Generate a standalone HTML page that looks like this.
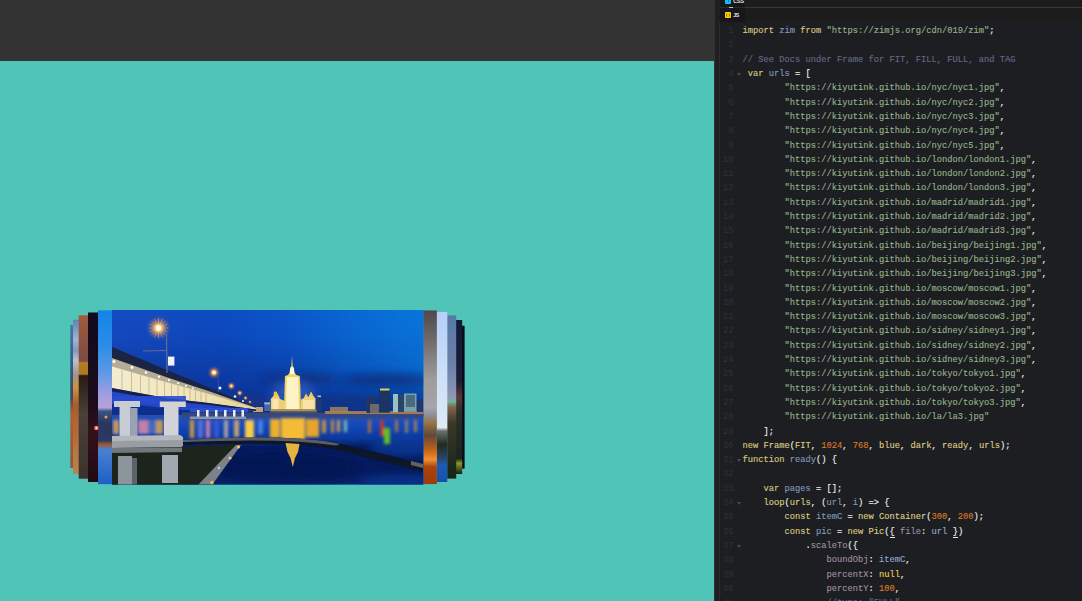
<!DOCTYPE html>
<html lang="en">
<head>
<meta charset="utf-8">
<title>ZIM Carousel - CodePen</title>
<style>
html,body{margin:0;padding:0;}
body{width:1082px;height:601px;overflow:hidden;position:relative;background:#1d1e22;font-family:"Liberation Mono",monospace;}
#preview{position:absolute;left:0;top:0;width:715px;height:601px;background:#333333;overflow:hidden;}
#stage{position:absolute;left:0;top:60.5px;width:714.4px;height:560px;background:#50c4b7;}
#gutterbar{position:absolute;left:715px;top:0;width:4.8px;height:601px;background:#1f1f22;}
#edge{position:absolute;left:719.2px;top:21.5px;width:0.9px;height:580px;background:#2b2c31;}
#csshead{position:absolute;left:720px;top:0;width:362px;height:7.4px;background:linear-gradient(90deg,#17171a 0,#17171a 25px,#1c1c1c 25px);}
#divider{position:absolute;left:720px;top:7.1px;width:362px;height:0.9px;background:linear-gradient(90deg,#2a2a2e 0,#2a2a2e 25px,#373739 25px);}
#handle{position:absolute;left:728.7px;top:7.1px;width:4.3px;height:0.9px;background:#c2c3cb;}
#jshead{position:absolute;left:720px;top:8px;width:362px;height:13.5px;background:#1c1c1c;}
#jstab{position:absolute;left:720px;top:8px;width:25px;height:13.5px;background:#17171b;}
.ico{position:absolute;left:725px;width:6.2px;height:6.2px;border-radius:1px;}
.tabt{position:absolute;left:733.2px;font-family:"Liberation Sans",sans-serif;font-weight:bold;font-size:5.3px;line-height:6px;color:#e8e9ee;letter-spacing:0;white-space:pre;}
#code{position:absolute;left:0;top:0;width:1082px;height:601px;overflow:hidden;}
.cl,.ln{position:absolute;height:14.3px;line-height:14.3px;font-size:8.75px;white-space:pre;}
.cl{left:742.4px;color:#f2f2f2;-webkit-text-stroke:0.12px currentColor;}
.ln{left:720px;width:13.5px;text-align:right;color:#2f3138;}
.fold{position:absolute;left:736.6px;width:0;height:0;border-left:2.1px solid transparent;border-right:2.1px solid transparent;border-top:3.1px solid #494b55;}
.k{color:#ddca7e;}
.v{color:#dfce86;}
.d{color:#809bbd;}
.s{color:#96b38a;}
.n{color:#d97a28;}
.p{color:#a08ea2;}
.a{color:#e8d24e;}
.w{color:#8fa9cf;}
.m{border-bottom:0.7px solid #e8e8e8;}
.c{color:#5f6b8c;}
</style>
</head>
<body>
<div id="preview"><div id="stage"></div>
<svg id="pic" width="715" height="601" viewBox="0 0 715 601" style="position:absolute;left:0;top:0">
<defs>
<clipPath id="cm"><rect x="112" y="310" width="311.3" height="174.4"/></clipPath>
<linearGradient id="sky" x1="0" y1="0" x2="1" y2="0"><stop offset="0" stop-color="#164cc2"/><stop offset="0.35" stop-color="#0d4cc2"/><stop offset="0.7" stop-color="#0a5ed0"/><stop offset="1" stop-color="#0876de"/></linearGradient>
<linearGradient id="skyv" x1="0" y1="0" x2="0" y2="1"><stop offset="0" stop-color="#062288" stop-opacity="0"/><stop offset="0.25" stop-color="#08268a" stop-opacity="0.12"/><stop offset="0.5" stop-color="#0a2884" stop-opacity="0.36"/><stop offset="0.75" stop-color="#0a2884" stop-opacity="0.62"/><stop offset="1" stop-color="#0c267a" stop-opacity="0.82"/></linearGradient>
<linearGradient id="az" x1="0" y1="0" x2="1" y2="0"><stop offset="0.55" stop-color="#0a70d4" stop-opacity="0"/><stop offset="1" stop-color="#0a74d8" stop-opacity="0.6"/></linearGradient>
<linearGradient id="azm" x1="0" y1="0" x2="0" y2="1"><stop offset="0" stop-color="#fff"/><stop offset="0.55" stop-color="#fff"/><stop offset="0.85" stop-color="#000"/></linearGradient>
<mask id="mz"><rect x="112" y="310" width="312" height="106" fill="url(#azm)"/></mask>
<linearGradient id="water" x1="0" y1="0" x2="0" y2="1"><stop offset="0" stop-color="#2850b0"/><stop offset="0.15" stop-color="#1448b8"/><stop offset="0.34" stop-color="#0b389c"/><stop offset="0.45" stop-color="#051c62"/><stop offset="0.8" stop-color="#051a5c"/><stop offset="1" stop-color="#08246e"/></linearGradient>
<radialGradient id="lamp"><stop offset="0" stop-color="#fff8e0"/><stop offset="0.25" stop-color="#ffc060"/><stop offset="0.6" stop-color="#c07850" stop-opacity="0.45"/><stop offset="1" stop-color="#6050a0" stop-opacity="0"/></radialGradient>
<linearGradient id="gA" x1="0" y1="0" x2="0" y2="1"><stop offset="0" stop-color="#1484e8"/><stop offset="0.2" stop-color="#2c8ce8"/><stop offset="0.35" stop-color="#5c98e4"/><stop offset="0.5" stop-color="#a69ee0"/><stop offset="0.56" stop-color="#b8a2d8"/><stop offset="0.58" stop-color="#3a5488"/><stop offset="0.65" stop-color="#283660"/><stop offset="0.75" stop-color="#2c3a62"/><stop offset="0.77" stop-color="#a05828"/><stop offset="0.8" stop-color="#4a80d0"/><stop offset="1" stop-color="#1c60c8"/></linearGradient>
<linearGradient id="gB" x1="0" y1="0" x2="0" y2="1"><stop offset="0" stop-color="#120a1e"/><stop offset="0.55" stop-color="#1c0c1c"/><stop offset="0.7" stop-color="#34101c"/><stop offset="1" stop-color="#200a14"/></linearGradient>
<linearGradient id="gC" x1="0" y1="0" x2="0" y2="1"><stop offset="0" stop-color="#a25a3a"/><stop offset="0.28" stop-color="#7a4c44"/><stop offset="0.29" stop-color="#b27a22"/><stop offset="0.36" stop-color="#b07820"/><stop offset="0.37" stop-color="#2a1a14"/><stop offset="0.6" stop-color="#4a4038"/><stop offset="1" stop-color="#3a322c"/></linearGradient>
<linearGradient id="gD" x1="0" y1="0" x2="0" y2="1"><stop offset="0" stop-color="#5c84b8"/><stop offset="0.13" stop-color="#a4b4cc"/><stop offset="0.2" stop-color="#8098b8"/><stop offset="0.26" stop-color="#c0c0c8"/><stop offset="0.36" stop-color="#a09488"/><stop offset="0.44" stop-color="#d09040"/><stop offset="0.55" stop-color="#a85c30"/><stop offset="0.8" stop-color="#b87040"/><stop offset="1" stop-color="#b88450"/></linearGradient>
<linearGradient id="gE" x1="0" y1="0" x2="0" y2="1"><stop offset="0" stop-color="#4878a8"/><stop offset="0.3" stop-color="#2c5a88"/><stop offset="0.5" stop-color="#3a4a60"/><stop offset="0.62" stop-color="#b06030"/><stop offset="1" stop-color="#8a5a40"/></linearGradient>
<linearGradient id="gR1" x1="0" y1="0" x2="0" y2="1"><stop offset="0" stop-color="#50484c"/><stop offset="0.2" stop-color="#767072"/><stop offset="0.4" stop-color="#a09c9c"/><stop offset="0.56" stop-color="#a6a4ac"/><stop offset="0.61" stop-color="#8c8894"/><stop offset="0.64" stop-color="#9a7a48"/><stop offset="0.72" stop-color="#60483a"/><stop offset="0.8" stop-color="#c06018"/><stop offset="0.86" stop-color="#f09030"/><stop offset="0.9" stop-color="#a84410"/><stop offset="1" stop-color="#a03a0a"/></linearGradient>
<linearGradient id="gR2" x1="0" y1="0" x2="0" y2="1"><stop offset="0" stop-color="#b6cef8"/><stop offset="0.4" stop-color="#d0e0f8"/><stop offset="0.68" stop-color="#e0e8f4"/><stop offset="0.7" stop-color="#6a7068"/><stop offset="0.78" stop-color="#202c20"/><stop offset="0.86" stop-color="#2a4468"/><stop offset="0.9" stop-color="#1c5cb4"/><stop offset="1" stop-color="#1850a8"/></linearGradient>
<linearGradient id="gR3" x1="0" y1="0" x2="0" y2="1"><stop offset="0" stop-color="#5878a8"/><stop offset="0.3" stop-color="#6a80a8"/><stop offset="0.5" stop-color="#8c98b4"/><stop offset="0.53" stop-color="#70b0a0"/><stop offset="0.56" stop-color="#806850"/><stop offset="0.66" stop-color="#3a3828"/><stop offset="1" stop-color="#16241a"/></linearGradient>
<linearGradient id="gR4" x1="0" y1="0" x2="0" y2="1"><stop offset="0" stop-color="#111a3a"/><stop offset="0.4" stop-color="#1a1e34"/><stop offset="0.5" stop-color="#5a3838"/><stop offset="0.6" stop-color="#2a3028"/><stop offset="0.9" stop-color="#1a2420"/><stop offset="0.93" stop-color="#8a9a20"/><stop offset="1" stop-color="#141c20"/></linearGradient>
<linearGradient id="band" x1="0" y1="0" x2="1" y2="0"><stop offset="0" stop-color="#f4ecd0"/><stop offset="0.6" stop-color="#f0e4b8"/><stop offset="1" stop-color="#e8d090"/></linearGradient>
<filter id="b1" x="-20%" y="-20%" width="140%" height="140%"><feGaussianBlur stdDeviation="0.7"/></filter>
<filter id="b2" x="-20%" y="-20%" width="140%" height="140%"><feGaussianBlur stdDeviation="1.6"/></filter>
<filter id="b4" x="-30%" y="-30%" width="160%" height="160%"><feGaussianBlur stdDeviation="4"/></filter>
</defs>
<!-- stacked slices left -->
<rect x="70.3" y="325" width="3" height="143" fill="url(#gE)"/>
<rect x="73" y="319.7" width="6" height="154.3" fill="url(#gD)"/>
<rect x="78.7" y="315.3" width="9.6" height="163.4" fill="url(#gC)"/>
<rect x="88" y="312.5" width="10.2" height="169.5" fill="url(#gB)"/>
<rect x="98" y="310.3" width="14.2" height="173.9" fill="url(#gA)"/>
<circle cx="96.3" cy="428" r="2.2" fill="#ff6a58" filter="url(#b1)"/><circle cx="96.5" cy="428" r="0.9" fill="#fff0e8"/>
<circle cx="106" cy="417" r="1.5" fill="#f0a040" filter="url(#b1)"/>
<!-- stacked slices right -->
<rect x="462" y="325.8" width="2.6" height="142.8" fill="#090a1a"/>
<rect x="456" y="320" width="6.2" height="154" fill="url(#gR4)"/>
<rect x="447.2" y="315.4" width="9" height="163.2" fill="url(#gR3)"/>
<rect x="436.7" y="312" width="10.6" height="170" fill="url(#gR2)"/>
<rect x="423.2" y="310.4" width="13.6" height="173.7" fill="url(#gR1)"/>
<!-- main photo -->
<g clip-path="url(#cm)">
<rect x="112" y="310" width="312" height="175" fill="url(#sky)"/>
<rect x="112" y="310" width="312" height="106" fill="url(#skyv)"/>
<rect x="112" y="310" width="312" height="106" fill="url(#az)" mask="url(#mz)"/>
<!-- clouds -->
<g filter="url(#b4)" opacity="0.8">
<ellipse cx="300" cy="379" rx="40" ry="4" fill="#15286c"/>
<ellipse cx="385" cy="380" rx="45" ry="6" fill="#0f2c7c"/>
<ellipse cx="230" cy="402" rx="40" ry="6" fill="#26367c"/>
<ellipse cx="350" cy="402" rx="40" ry="5" fill="#163080"/>
<ellipse cx="293" cy="395" rx="22" ry="14" fill="#3a66cc" opacity="0.7"/>
</g>
<!-- water -->
<rect x="112" y="415" width="312" height="70" fill="url(#water)"/>
<ellipse cx="285" cy="468" rx="70" ry="16" fill="#041450" opacity="0.7" filter="url(#b4)"/>
<ellipse cx="405" cy="447" rx="36" ry="9" fill="#0e40a4" opacity="0.7" filter="url(#b4)"/>
<ellipse cx="400" cy="482" rx="40" ry="8" fill="#0c389c" opacity="0.6" filter="url(#b4)"/>
<!-- shoreline -->
<rect x="182" y="412.5" width="242" height="5" fill="#34467c" filter="url(#b1)"/>
<rect x="325" y="411" width="99" height="3" fill="#b88450" filter="url(#b1)" opacity="0.85"/>
<!-- reflections -->
<g filter="url(#b2)">
<rect x="270" y="419" width="10" height="19" fill="#eeb02c"/>
<rect x="281" y="418" width="24" height="22" fill="#f4bc34"/>
<rect x="306" y="419" width="13" height="18" fill="#e8a42c"/>
<rect x="245" y="420" width="9" height="19" fill="#f8cc48"/>
<rect x="258" y="420" width="5" height="14" fill="#4a80e0"/>
<rect x="322" y="420" width="4" height="13" fill="#c89040"/>
<rect x="331" y="420" width="3" height="13" fill="#c8903c"/>
<rect x="337" y="420" width="3" height="12" fill="#d0a050"/>
<rect x="344" y="420" width="3" height="12" fill="#80c0b0"/>
<rect x="368" y="420" width="3" height="13" fill="#b07040"/>
<rect x="380" y="420" width="4" height="16" fill="#c03838"/>
<rect x="384" y="428" width="6" height="16" fill="#62c020"/>
<rect x="395" y="420" width="3" height="12" fill="#a07850"/>
<rect x="405" y="420" width="3" height="13" fill="#90806c"/>
<rect x="414" y="420" width="3" height="12" fill="#a08060"/>
<rect x="190" y="420" width="4" height="18" fill="#d89838"/>
<rect x="198" y="420" width="5" height="18" fill="#5a70d0"/>
<rect x="206" y="420" width="4" height="18" fill="#c880b0"/>
<rect x="214" y="420" width="5" height="18" fill="#3458d0"/>
<rect x="224" y="420" width="4" height="18" fill="#b0a0a8"/>
<rect x="234" y="420" width="5" height="17" fill="#c8a070"/>
</g>
<!-- building main -->
<g filter="url(#b1)">
<path d="M292 355.500 L292.700 366 L294 368 L294.500 372.500 L296.300 375 L299.800 376 L300.400 388 L301 411 L284 411 L284.600 388 L285 376 L288 375 L289.600 372.500 L290.200 368 L291.400 366 Z" fill="#f2d468"/>
<path d="M286.800 377 L298.200 377 L299 410 L286 410 Z" fill="#fdf3c4"/>
<path d="M290.600 367.500 L293.600 367.500 L294.400 374 L289.800 374 Z" fill="#fffbe6"/>
<path d="M270.700 411 L270.700 399 L273 396.500 L276.200 391.500 L279 396.500 L280 399 L285 401 L285 411 Z" fill="#ecd07a"/>
<path d="M274 391.800 L276.200 391.500 L278.600 396 L273.600 396.500 Z" fill="#f2c832"/>
<path d="M301 411 L301 399.500 L303.800 398 L306 393.800 L308.200 397 L309 396 L311 391.800 L313.400 396 L315.500 398.500 L315.500 411 Z" fill="#ecd07a"/>
<path d="M309.400 395.500 L311 391.800 L313 395.500 Z M304.600 397 L306 393.800 L307.600 397 Z" fill="#f2c832"/>
<rect x="272.500" y="399" width="6" height="11" fill="#f8e8b0"/>
<rect x="303" y="400" width="11" height="10" fill="#f6e4a8"/>
<rect x="264.300" y="402.400" width="5.700" height="8.600" fill="#4a68a8"/>
<rect x="264.300" y="402.400" width="5.700" height="2" fill="#88b8e8"/>
<rect x="317" y="395.500" width="4.500" height="15.500" fill="#22386e"/>
<rect x="317.500" y="395.500" width="3.500" height="1.600" fill="#a8c0e0"/>
<rect x="253" y="407" width="10" height="5" fill="#c0a078"/>
<rect x="270" y="409" width="47" height="3.500" fill="#8a7448" opacity="0.700"/>
</g>
<!-- right city -->
<g filter="url(#b1)">
<rect x="366.500" y="397" width="8" height="16" fill="#26365c"/>
<rect x="370" y="404" width="20" height="9" fill="#6a6a70"/>
<rect x="379" y="388.500" width="11" height="24" fill="#1e3460"/>
<rect x="380" y="388.500" width="9.500" height="2" fill="#d8d060"/>
<rect x="393" y="394" width="5" height="18" fill="#9cc0c0"/>
<rect x="398" y="395" width="6" height="17" fill="#2c4468"/>
<rect x="404" y="393.500" width="12.500" height="18" fill="#7aa0a8"/>
<rect x="406" y="395" width="9" height="12" fill="#4a6c84"/>
<rect x="417" y="400" width="6" height="12" fill="#20386c"/>
<rect x="330" y="407" width="18" height="5" fill="#a8885c" opacity="0.8"/>
</g>
<!-- bridge -->
<path d="M112 386 L112 402 L182 410 L256 411 L256 408 Z" fill="#2446c4"/>
<path d="M112 347 L256 407.300 L256 409 L112 360 Z" fill="#1c2444"/>
<path d="M112 358 L167.500 377.400 L209 391.300 L256 407.800 L256 409.600 L209 403 L167.500 398.200 L112 388 Z" fill="#b4ac94"/>
<path d="M112 366.500 L167.500 382.500 L209 394 L256 408.200 L256 409.600 L209 403 L167.500 398.200 L112 388 Z" fill="url(#band)"/>
<path d="M112 388 L167.500 398.200 L209 403 L256 409.600 L256 411 L209 405 L167.500 401 L112 391.500 Z" fill="#16204a"/>
<g stroke="#c0b088" stroke-width="0.900" opacity="0.850">
<path d="M122 369.500 L122 389.500 M131.500 372.200 L131.500 391.300 M140.500 374.800 L140.500 393 M149 377.200 L149 394.600 M157 379.500 L157 396 M164.500 381.700 L164.500 397.400 M171.500 383.600 L171.500 398.600 M178 385.400 L178 399.400 M184 387 L184 400.100 M190 388.700 L190 400.800 M195.500 390.300 L195.500 401.400 M201 391.800 L201 402 M206 393.200 L206 402.600"/>
</g>
<g fill="#fffef0" filter="url(#b1)"><circle cx="114" cy="361.500" r="1.500"/><circle cx="132" cy="367.500" r="1.400"/><circle cx="146" cy="372.500" r="1.300"/><circle cx="159" cy="376.800" r="1.200"/><circle cx="169" cy="380.200" r="1.100"/><circle cx="178" cy="383.200" r="1"/><circle cx="186" cy="385.800" r="1"/><circle cx="193" cy="388.200" r="0.900"/></g>
<!-- under bridge small pillars -->
<rect x="112" y="396" width="74" height="8" fill="#2a4cd0" opacity="0.9" filter="url(#b1)"/>
<rect x="190" y="408" width="58" height="4" fill="#2c50d0" filter="url(#b1)"/>
<g fill="#e8ecf4" filter="url(#b1)"><rect x="197" y="410" width="2.500" height="7.500"/><rect x="206" y="410" width="2.500" height="7.500"/><rect x="215" y="410" width="2.500" height="7.500"/><rect x="224" y="410" width="2.500" height="7.500"/><rect x="233" y="410" width="2.500" height="7.500"/><rect x="241.500" y="410" width="2.500" height="7.500"/></g>
<rect x="190" y="416.500" width="56" height="2.500" fill="#8c94a8" filter="url(#b1)"/>
<!-- behind pillars water colours -->
<g filter="url(#b2)">
<rect x="138" y="420" width="10" height="14" fill="#c080a8"/>
<rect x="148" y="420" width="8" height="14" fill="#4868c0"/>
<rect x="156" y="420" width="7" height="14" fill="#c09858"/>
<rect x="113" y="420" width="6" height="14" fill="#c89860"/>
</g>
<!-- big pillars -->
<g filter="url(#b1)">
<rect x="130.500" y="408" width="7" height="28" fill="#9aa2b2"/>
<rect x="114" y="401" width="26" height="6" fill="#c8ccd4"/>
<rect x="159.800" y="401.500" width="26" height="5.500" fill="#d4d4cc"/>
<rect x="119.500" y="406" width="11" height="31" fill="#c8ccd4"/>
<rect x="164" y="406" width="14.500" height="31" fill="#d0d4d8"/>
<path d="M112 436 L180 435 L183 437 L183 446 L178 447.500 L112 448 Z" fill="#b4b8bc"/>
<path d="M112 441 L183 440 L183 446 L178 447.500 L112 448 Z" fill="#9a9ea4"/>
</g>
<!-- reflection bottom-left -->
<path d="M112 448 L182 447 L238 444 L210 485 L112 485 Z" fill="#1c241c"/>
<path d="M112 448 L182 447.500 L182 452 L112 453 Z" fill="#70787c" filter="url(#b1)"/>
<g filter="url(#b1)">
<rect x="118" y="456" width="14" height="29" fill="#8c949c"/>
<rect x="132" y="458" width="5" height="27" fill="#5c646c"/>
<rect x="162" y="455" width="16" height="28" fill="#a0a8b0"/>
<path d="M236 445 L241 445 L212 485 L198 485 Z" fill="#7c8288"/>
</g>
<!-- pier -->
<path d="M183 440 Q285 434 333 442 L423 463.500 L423 472 L333 449 Q285 441 183 445 Z" fill="#10142a" filter="url(#b1)"/>
<path d="M183 440 Q285 434 333 442.500 L340 444 L336 445.500 Q285 437.500 183 442 Z" fill="#5c5c64" filter="url(#b1)"/>
<path d="M411 461 L423 464 L423 468 L411 465 Z" fill="#68605c" filter="url(#b1)"/>
<!-- tower reflection -->
<g filter="url(#b1)">
<path d="M285.500 443 L299.500 444 L298 452 L295 458 L292.800 467 L290.500 458 L287.500 452 Z" fill="#e4b440"/>
<circle cx="238.500" cy="447" r="1.500" fill="#ffc070"/>
<circle cx="230" cy="458" r="1.600" fill="#ffc070"/>
<circle cx="212" cy="482.500" r="1.800" fill="#ffb050"/>
<circle cx="219" cy="468" r="1.200" fill="#c0d0e0"/>
</g>
<!-- lamps -->
<path d="M166.500 334 L167 373 M143 351 L166 350.500" stroke="#6a6a90" stroke-width="1.200" fill="none"/>
<rect x="168" y="356.600" width="6.400" height="9" fill="#eef2ff" filter="url(#b1)"/>
<circle cx="158.500" cy="328" r="13" fill="url(#lamp)"/>
<g stroke="#ffd8a0" stroke-width="0.500" opacity="0.7"><path d="M158.500 318 L158.500 338 M148.500 328 L168.500 328 M151.500 321 L165.500 335 M151.500 335 L165.500 321 M154.500 319 L162.500 337 M149.500 332 L167.500 324 M154.500 337 L162.500 319 M149.500 324 L167.500 332"/></g>
<circle cx="158.500" cy="328" r="2.800" fill="#fffbe8"/>
<circle cx="214" cy="372.500" r="7" fill="url(#lamp)"/>
<circle cx="214" cy="372.500" r="1.800" fill="#fff4d8"/>
<path d="M218 376 L218.500 392" stroke="#48508c" stroke-width="0.900"/>
<circle cx="231.300" cy="386" r="4.500" fill="url(#lamp)"/>
<circle cx="239.700" cy="393" r="3.600" fill="url(#lamp)"/>
<circle cx="245.500" cy="398" r="2.600" fill="url(#lamp)"/>
<circle cx="250" cy="402" r="2" fill="url(#lamp)"/>
<circle cx="220" cy="388" r="1.500" fill="#f0f4ff" filter="url(#b1)"/>
<circle cx="235" cy="396.500" r="1.300" fill="#e8f0ff" filter="url(#b1)"/>
<circle cx="243" cy="401" r="1" fill="#e8f0ff" filter="url(#b1)"/>
</g>
</svg>

</div>
<div id="gutterbar"></div><div id="edge"></div>
<div id="csshead"></div>
<div class="ico" style="top:-2.2px;background:#0ebeff"><div style="position:absolute;left:2.5px;top:0;width:1.3px;height:3.9px;background:#116a94"></div></div>
<div class="tabt" style="top:-2px">CSS</div>
<div id="divider"></div><div id="handle"></div>
<div id="jshead"></div><div id="jstab"></div>
<div class="ico" style="top:12px;background:#fcd000"><svg width="6.2" height="6.2" viewBox="0 0 62 62" style="display:block"><path d="M20 16 q-9 15 0 30 M42 16 q9 15 0 30" fill="none" stroke="#5e4a00" stroke-width="7"/></svg></div>
<div class="tabt" style="top:12.2px;letter-spacing:-0.35px">JS</div>
<div id="code">
<div class="ln" style="top:24.15px">1</div>
<div class="cl" style="top:24.15px"><span class="k">import</span> <span class="d">zim</span> <span class="k">from</span> <span class="s">"https://zimjs.org/cdn/019/zim"</span>;</div>
<div class="ln" style="top:38.45px">2</div>
<div class="ln" style="top:52.75px">3</div>
<div class="cl" style="top:52.75px"><span class="c">// See Docs under Frame for FIT, FILL, FULL, and TAG</span></div>
<div class="ln" style="top:67.05px">4</div>
<div class="fold" style="top:72.65px"></div>
<div class="cl" style="top:67.05px"> <span class="k">var</span> <span class="d">urls</span> = [</div>
<div class="ln" style="top:81.35px">5</div>
<div class="cl" style="top:81.35px">        <span class="s">"https://kiyutink.github.io/nyc/nyc1.jpg"</span>,</div>
<div class="ln" style="top:95.65px">6</div>
<div class="cl" style="top:95.65px">        <span class="s">"https://kiyutink.github.io/nyc/nyc2.jpg"</span>,</div>
<div class="ln" style="top:109.95px">7</div>
<div class="cl" style="top:109.95px">        <span class="s">"https://kiyutink.github.io/nyc/nyc3.jpg"</span>,</div>
<div class="ln" style="top:124.25px">8</div>
<div class="cl" style="top:124.25px">        <span class="s">"https://kiyutink.github.io/nyc/nyc4.jpg"</span>,</div>
<div class="ln" style="top:138.55px">9</div>
<div class="cl" style="top:138.55px">        <span class="s">"https://kiyutink.github.io/nyc/nyc5.jpg"</span>,</div>
<div class="ln" style="top:152.85px">10</div>
<div class="cl" style="top:152.85px">        <span class="s">"https://kiyutink.github.io/london/london1.jpg"</span>,</div>
<div class="ln" style="top:167.15px">11</div>
<div class="cl" style="top:167.15px">        <span class="s">"https://kiyutink.github.io/london/london2.jpg"</span>,</div>
<div class="ln" style="top:181.45px">12</div>
<div class="cl" style="top:181.45px">        <span class="s">"https://kiyutink.github.io/london/london3.jpg"</span>,</div>
<div class="ln" style="top:195.75px">13</div>
<div class="cl" style="top:195.75px">        <span class="s">"https://kiyutink.github.io/madrid/madrid1.jpg"</span>,</div>
<div class="ln" style="top:210.05px">14</div>
<div class="cl" style="top:210.05px">        <span class="s">"https://kiyutink.github.io/madrid/madrid2.jpg"</span>,</div>
<div class="ln" style="top:224.35px">15</div>
<div class="cl" style="top:224.35px">        <span class="s">"https://kiyutink.github.io/madrid/madrid3.jpg"</span>,</div>
<div class="ln" style="top:238.65px">16</div>
<div class="cl" style="top:238.65px">        <span class="s">"https://kiyutink.github.io/beijing/beijing1.jpg"</span>,</div>
<div class="ln" style="top:252.95px">17</div>
<div class="cl" style="top:252.95px">        <span class="s">"https://kiyutink.github.io/beijing/beijing2.jpg"</span>,</div>
<div class="ln" style="top:267.25px">18</div>
<div class="cl" style="top:267.25px">        <span class="s">"https://kiyutink.github.io/beijing/beijing3.jpg"</span>,</div>
<div class="ln" style="top:281.55px">19</div>
<div class="cl" style="top:281.55px">        <span class="s">"https://kiyutink.github.io/moscow/moscow1.jpg"</span>,</div>
<div class="ln" style="top:295.85px">20</div>
<div class="cl" style="top:295.85px">        <span class="s">"https://kiyutink.github.io/moscow/moscow2.jpg"</span>,</div>
<div class="ln" style="top:310.15px">21</div>
<div class="cl" style="top:310.15px">        <span class="s">"https://kiyutink.github.io/moscow/moscow3.jpg"</span>,</div>
<div class="ln" style="top:324.45px">22</div>
<div class="cl" style="top:324.45px">        <span class="s">"https://kiyutink.github.io/sidney/sidney1.jpg"</span>,</div>
<div class="ln" style="top:338.75px">23</div>
<div class="cl" style="top:338.75px">        <span class="s">"https://kiyutink.github.io/sidney/sidney2.jpg"</span>,</div>
<div class="ln" style="top:353.05px">24</div>
<div class="cl" style="top:353.05px">        <span class="s">"https://kiyutink.github.io/sidney/sidney3.jpg"</span>,</div>
<div class="ln" style="top:367.35px">25</div>
<div class="cl" style="top:367.35px">        <span class="s">"https://kiyutink.github.io/tokyo/tokyo1.jpg"</span>,</div>
<div class="ln" style="top:381.65px">26</div>
<div class="cl" style="top:381.65px">        <span class="s">"https://kiyutink.github.io/tokyo/tokyo2.jpg"</span>,</div>
<div class="ln" style="top:395.95px">27</div>
<div class="cl" style="top:395.95px">        <span class="s">"https://kiyutink.github.io/tokyo/tokyo3.jpg"</span>,</div>
<div class="ln" style="top:410.25px">28</div>
<div class="cl" style="top:410.25px">        <span class="s">"https://kiyutink.github.io/la/la3.jpg"</span></div>
<div class="ln" style="top:424.55px">29</div>
<div class="cl" style="top:424.55px">    ];</div>
<div class="ln" style="top:438.85px">30</div>
<div class="cl" style="top:438.85px"><span class="k">new</span> <span class="v">Frame</span>(<span class="v">FIT</span>, <span class="n">1024</span>, <span class="n">768</span>, <span class="v">blue</span>, <span class="v">dark</span>, <span class="v">ready</span>, <span class="v">urls</span>);</div>
<div class="ln" style="top:453.15px">31</div>
<div class="fold" style="top:458.75px"></div>
<div class="cl" style="top:453.15px"><span class="k">function</span> <span class="d">ready</span>() {</div>
<div class="ln" style="top:467.45px">32</div>
<div class="ln" style="top:481.75px">33</div>
<div class="cl" style="top:481.75px">    <span class="k">var</span> <span class="d">pages</span> = [];</div>
<div class="ln" style="top:496.05px">34</div>
<div class="fold" style="top:501.65px"></div>
<div class="cl" style="top:496.05px">    <span class="v">loop</span>(<span class="v">urls</span>, (<span class="d">url</span>, <span class="d">i</span>) =&gt; {</div>
<div class="ln" style="top:510.35px">35</div>
<div class="cl" style="top:510.35px">        <span class="k">const</span> <span class="d">itemC</span> = <span class="k">new</span> <span class="v">Container</span>(<span class="n">300</span>, <span class="n">200</span>);</div>
<div class="ln" style="top:524.65px">36</div>
<div class="cl" style="top:524.65px">        <span class="k">const</span> <span class="d">pic</span> = <span class="k">new</span> <span class="v">Pic</span>(<span class="m">{</span> <span class="p">file</span>: <span class="w">url</span> <span class="m">}</span>)</div>
<div class="ln" style="top:538.95px">37</div>
<div class="fold" style="top:544.55px"></div>
<div class="cl" style="top:538.95px">            .<span class="p">scaleTo</span>({</div>
<div class="ln" style="top:553.25px">38</div>
<div class="cl" style="top:553.25px">                <span class="p">boundObj</span>: <span class="w">itemC</span>,</div>
<div class="ln" style="top:567.55px">39</div>
<div class="cl" style="top:567.55px">                <span class="p">percentX</span>: <span class="a">null</span>,</div>
<div class="ln" style="top:581.85px">40</div>
<div class="cl" style="top:581.85px">                <span class="p">percentY</span>: <span class="n">100</span>,</div>
<div class="ln" style="top:596.15px">41</div>
<div class="cl" style="top:596.15px">                <span class="c">//type: "FULL"</span></div>
</div>
</body>
</html>
